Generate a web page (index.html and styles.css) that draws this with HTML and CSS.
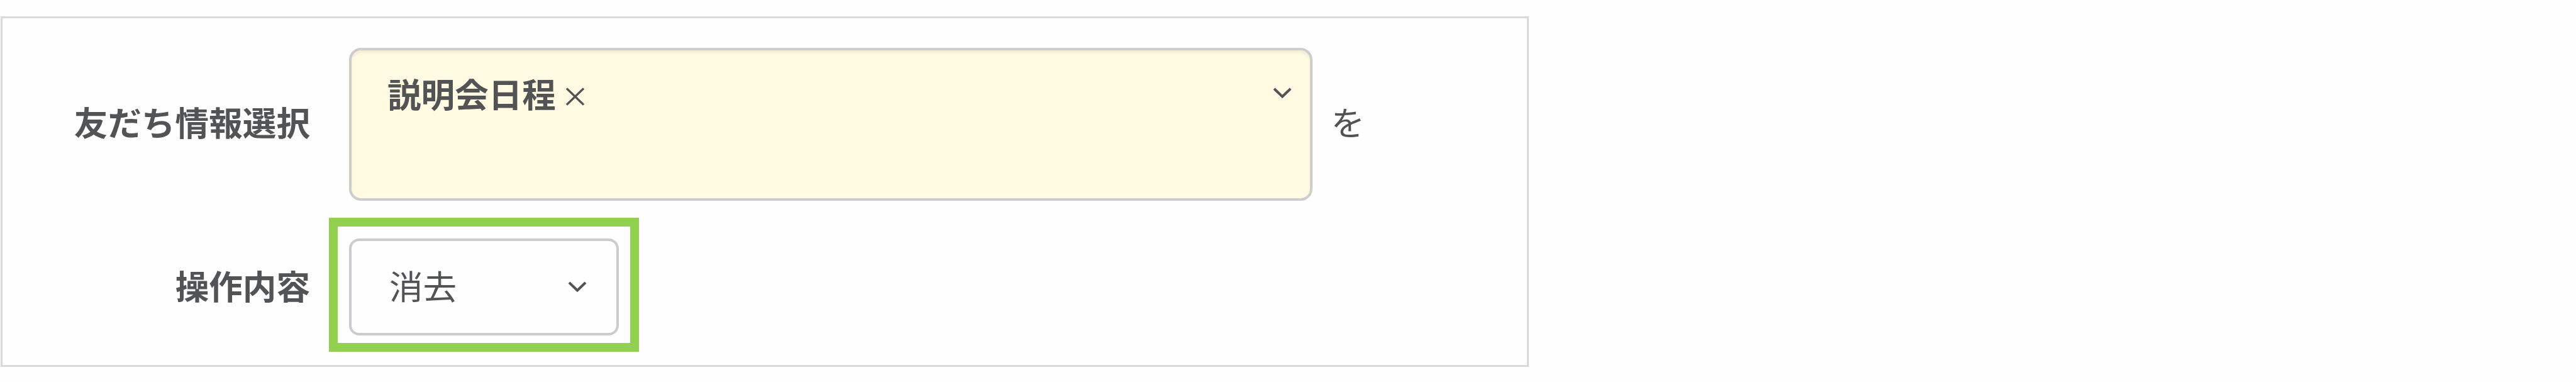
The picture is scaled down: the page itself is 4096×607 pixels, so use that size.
FILE: index.html
```html
<!DOCTYPE html>
<html lang="ja">
<head>
<meta charset="utf-8">
<title>友だち情報選択</title>
<link rel="stylesheet" href="styles.css">
</head>
<body>
<main class="card">
  <div class="row row-info">
    <span class="label">友だち情報選択</span>
    <div class="tag-select">
      <span class="tag">説明会日程</span>
      <svg class="remove" viewBox="0 0 32 30"><path d="M2 1.5 30 28.5M30 1.5 2 28.5"/></svg>
      <svg class="chevron" viewBox="0 0 31 18"><path d="M2 2 15.5 15 29 2"/></svg>
    </div>
    <span class="particle">を</span>
  </div>
  <div class="row row-action">
    <span class="label">操作内容</span>
    <div class="select">
      <span class="value">消去</span>
      <svg class="chevron" viewBox="0 0 31 18"><path d="M2 2 15.5 15 29 2"/></svg>
    </div>
  </div>
</main>
</body>
</html>
```
FILE: styles.css
```css
* { box-sizing: border-box; }

body {
  margin: 0;
  padding: 26px 0 0 1px;
  background: #fefefe;
  color: #525355;
  font-family: "Noto Sans CJK JP", sans-serif;
  font-size: 53.6px;
  line-height: 80px;
  overflow: hidden;
}

.card {
  display: flex;
  flex-direction: column;
  gap: 60px;
  width: 2430px;
  height: 557px;
  padding: 47px 0 0;
  border: 3px solid #d9d9d9;
}

.row {
  display: flex;
  align-items: center;
}

.label {
  width: 489px;
  margin-right: 62px;
  padding-bottom: 9px;
  text-align: right;
  font-weight: 700;
  white-space: nowrap;
}

.row-action .label {
  padding-bottom: 7px;
}

.tag-select {
  display: flex;
  align-items: flex-start;
  width: 1532px;
  height: 243px;
  padding: 28px 29px 0 57px;
  border: 4px solid #cdcdce;
  border-radius: 19px;
  background: #fffae1;
  box-shadow: inset 0 4px 4px rgba(0, 0, 0, .06);
}

.tag {
  font-weight: 700;
}

.remove {
  width: 31px;
  height: 29px;
  margin: 31px 0 0 15px;
}

.chevron {
  width: 30px;
  height: 17.4px;
  margin-left: auto;
}

.tag-select .chevron {
  margin-top: 31px;
}

svg path {
  fill: none;
  stroke: #525355;
  stroke-width: 3.4;
}

.chevron path {
  stroke-width: 4.2;
}

.particle {
  margin-left: 29.5px;
  padding-bottom: 9px;
}

.select {
  position: relative;
  display: flex;
  align-items: center;
  width: 429px;
  height: 154px;
  padding: 0 47px 0 60px;
  border: 4px solid #cbcbd0;
  border-radius: 16px;
}

.value {
  padding-bottom: 7px;
}

/* Highlight frame around the action select */
.select::after {
  content: "";
  position: absolute;
  inset: -37.5px -35.5px -30px -36.5px;
  border: 14px solid #92d050;
}
```
